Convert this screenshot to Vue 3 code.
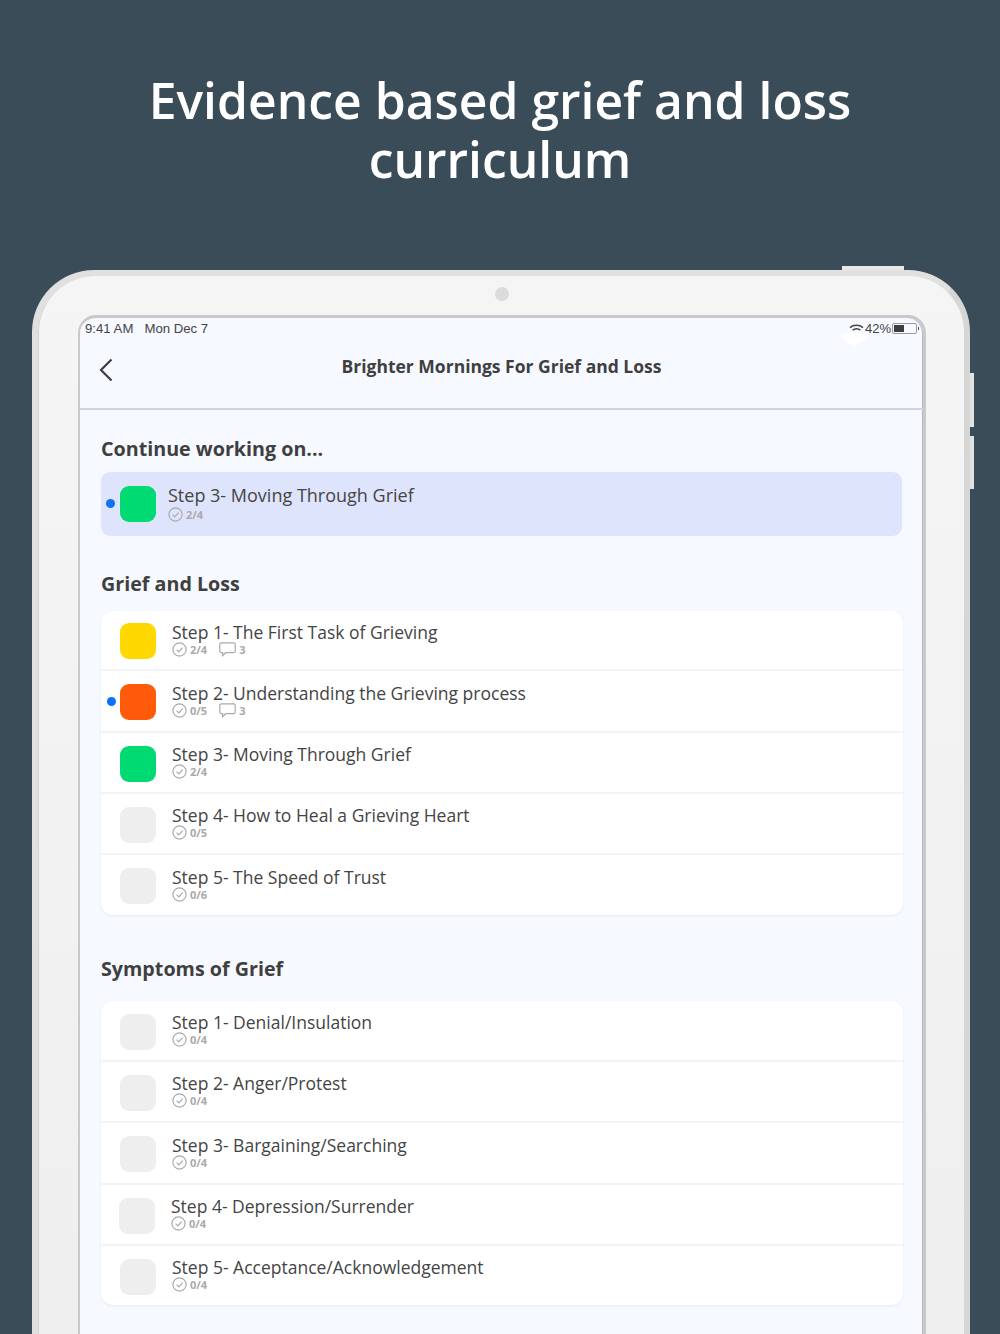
<script setup>
const griefRows = [
  { title: 'Step 1- The First Task of Grieving', done: '2/4', comments: 3, color: '#ffd800', short: true },
  { title: 'Step 2- Understanding the Grieving process', done: '0/5', comments: 3, color: '#ff5a0a', active: true, tall: true },
  { title: 'Step 3- Moving Through Grief', done: '2/4', color: '#00da72' },
  { title: 'Step 4- How to Heal a Grieving Heart', done: '0/5', color: '#eeeeee' },
  { title: 'Step 5- The Speed of Trust', done: '0/6', color: '#eeeeee' },
]
const symptomRows = [
  { title: 'Step 1- Denial/Insulation', done: '0/4', color: '#eeeeee' },
  { title: 'Step 2- Anger/Protest', done: '0/4', color: '#eeeeee' },
  { title: 'Step 3- Bargaining/Searching', done: '0/4', color: '#eeeeee', tall: true },
  { title: 'Step 4- Depression/Surrender', done: '0/4', color: '#eeeeee', nudge: true },
  { title: 'Step 5- Acceptance/Acknowledgement', done: '0/4', color: '#eeeeee' },
]
const groups = [
  { name: 'Grief and Loss', rows: griefRows },
  { name: 'Symptoms of Grief', rows: symptomRows },
]
</script>

<template>
  <div class="page">
    <h1 class="headline">Evidence based grief and loss<br />curriculum</h1>

    <div class="device">
      <span class="top-button"></span>
      <span class="side-button side-one"></span>
      <span class="side-button side-two"></span>
      <span class="camera"></span>

      <div class="screen">
        <div class="status">
          <span class="time">9:41 AM</span>
          <span class="date">Mon Dec 7</span>
          <span class="status-right">
            <svg class="wifi" width="15" height="10" viewBox="0 0 15 10" fill="none" stroke="#444" stroke-width="1.5">
              <path d="M1 3.6C4.6 .6 10.4 .6 14 3.6" />
              <path d="M3.6 6.2C5.8 4.4 9.2 4.4 11.4 6.2" />
            </svg>
            <span class="percent">42%</span>
            <span class="battery"><span class="battery-fill"></span></span>
            <span class="battery-tip"></span>
          </span>
          <svg class="wifi-ghost" width="27" height="17" viewBox="0 0 27 17" fill="#fff">
            <path d="M0 7C7 .5 20 .5 27 7L13.5 17Z" />
          </svg>
        </div>

        <header class="nav">
          <svg class="back" width="14" height="24" viewBox="0 0 14 24" fill="none" stroke="#3d3d3d" stroke-width="2.2">
            <path d="M12.5 1.5L2 12L12.5 22.5" />
          </svg>
          <span class="nav-title">Brighter Mornings For Grief and Loss</span>
        </header>

        <main class="content">
          <h2 class="section-title first">Continue working on...</h2>
          <div class="continue">
            <span class="dot"></span>
            <span class="swatch swatch-green"></span>
            <div class="text">
              <div class="row-title row-title-large">Step 3- Moving Through Grief</div>
              <div class="meta">
                <svg width="15" height="15" viewBox="0 0 15 15" fill="none" stroke="#aaa" stroke-width="1.2">
                  <circle cx="7.5" cy="7.5" r="6.6" />
                  <path d="M4.6 7.6L6.8 9.8L10.6 5.6" />
                </svg>
                <span>2/4</span>
              </div>
            </div>
          </div>

          <section v-for="group in groups" :key="group.name" class="group">
            <h2 class="section-title">{{ group.name }}</h2>
            <div class="card">
              <div
                v-for="row in group.rows"
                :key="row.title"
                class="row"
                :class="{ tall: row.tall, short: row.short, nudge: row.nudge }"
              >
                <span v-if="row.active" class="dot"></span>
                <span class="swatch" :style="{ background: row.color }"></span>
                <div class="text">
                  <div class="row-title">{{ row.title }}</div>
                  <div class="meta">
                    <svg width="15" height="15" viewBox="0 0 15 15" fill="none" stroke="#aaa" stroke-width="1.2">
                      <circle cx="7.5" cy="7.5" r="6.6" />
                      <path d="M4.6 7.6L6.8 9.8L10.6 5.6" />
                    </svg>
                    <span>{{ row.done }}</span>
                    <template v-if="row.comments">
                      <svg class="comment" width="17" height="15" viewBox="0 0 17 15" fill="none" stroke="#aaa" stroke-width="1.2">
                        <path d="M2.5 .8H14.5A1.7 1.7 0 0 1 16.2 2.5V9A1.7 1.7 0 0 1 14.5 10.7H6.6L3.6 13.6V10.7H2.5A1.7 1.7 0 0 1 .8 9V2.5A1.7 1.7 0 0 1 2.5 .8Z" />
                      </svg>
                      <span>{{ row.comments }}</span>
                    </template>
                  </div>
                </div>
              </div>
            </div>
          </section>
        </main>
      </div>
    </div>
  </div>
</template>

<style>
html, body { margin: 0; background: #3b4c59; }
</style>

<style scoped>
.page {
  width: 1000px;
  height: 1334px;
  overflow: hidden;
  background: #3b4c59;
  font-family: "Open Sans", sans-serif;
  box-sizing: border-box;
  padding-top: 71px;
}
.headline {
  margin: 0 0 81px;
  text-align: center;
  color: #fff;
  font-size: 49.8px;
  line-height: 59px;
  font-weight: 600;
}
.device {
  position: relative;
  box-sizing: border-box;
  width: 938px;
  height: 1200px;
  margin-left: 32px;
  padding: 39px 40px 0 40px;
  background: linear-gradient(180deg, #f5f5f5, #eeeeee);
  border: 6px solid #e0e0e0;
  border-right-color: #d6d6d6;
  border-radius: 62px;
  box-shadow: inset 1px 0 0 #d2d2d2;
}
.top-button {
  position: absolute;
  top: -10px;
  left: 804px;
  width: 62px;
  height: 4px;
  background: #e8e8e8;
}
.side-button {
  position: absolute;
  left: 932px;
  width: 4px;
  background: #e2e2e2;
}
.side-one { top: 97px; height: 54px; }
.side-two { top: 160px; height: 53px; }
.camera {
  position: absolute;
  top: 11px;
  left: 457px;
  width: 14px;
  height: 14px;
  border-radius: 50%;
  background: #dcdcdc;
}
.screen {
  box-sizing: border-box;
  width: 848px;
  height: 1100px;
  background: #f6f9ff;
  border: 3px solid #c9c9c9;
  border-left-width: 2px;
  border-bottom: 0;
  border-radius: 18px 18px 0 0;
  box-shadow: inset -1px 0 0 #aeb8dc;
}
.status {
  position: relative;
  display: flex;
  align-items: center;
  height: 21px;
  padding: 0 3px 0 5px;
  font-family: "Liberation Sans", sans-serif;
  font-size: 13.2px;
  color: #444;
}
.date { margin-left: 11px; }
.status-right {
  margin-left: auto;
  display: flex;
  align-items: center;
  gap: 1px;
}
.percent { font-size: 13px; }
.battery {
  box-sizing: border-box;
  display: block;
  width: 25px;
  height: 11px;
  padding: 1px;
  border: 1px solid #999;
  border-radius: 2px;
}
.battery-fill { display: block; width: 10px; height: 100%; background: #3d3d3d; }
.battery-tip { width: 1px; height: 3px; background: #555; margin-right: 1px; }
.wifi-ghost {
  position: absolute;
  right: 56px;
  top: 12px;
}
.nav {
  position: relative;
  box-sizing: border-box;
  height: 71px;
  display: flex;
  align-items: center;
  justify-content: center;
  border-bottom: 2px solid #d2d5d8;
  padding-bottom: 16px;
}
.back {
  position: absolute;
  left: 19px;
  top: 19px;
}
.nav-title {
  font-size: 17.5px;
  font-weight: 700;
  color: #3f3f3f;
}
.content { padding: 0 20px 0 21px; }
.section-title {
  margin: 0;
  font-size: 19.7px;
  line-height: 28px;
  font-weight: 700;
  color: #3f3f3f;
}
.section-title.first { padding-top: 25px; margin-bottom: 9px; }
.continue {
  position: relative;
  box-sizing: border-box;
  height: 64px;
  display: flex;
  align-items: center;
  gap: 12px;
  padding-left: 19px;
  margin-right: 1px;
  background: #dfe4fd;
  border-radius: 9px;
}
.continue .text { margin-top: -2px; }
.continue .meta { margin-top: 0; }
.group { padding-top: 34px; }
.group + .group { padding-top: 40px; }
.group .section-title { margin-bottom: 13px; }
.group + .group .section-title { margin-bottom: 18px; }
.card {
  background: #fff;
  border-radius: 12px;
  box-shadow: 0 1px 2px rgba(210, 220, 235, .5);
}
.row {
  position: relative;
  box-sizing: border-box;
  height: 61px;
  display: flex;
  align-items: center;
  gap: 16px;
  padding-left: 19px;
  border-bottom: 2px solid #f1f4fa;
}
.row.tall { height: 62px; }
.row.short { height: 60px; }
.row.nudge { padding-left: 18px; }
.row:last-child { border-bottom: 0; height: 60px; }
.group + .group .row:last-child { height: 59px; }
.row .swatch { margin-top: 2px; }
.row .dot { left: 6px; margin-top: -4px; }
.dot {
  position: absolute;
  left: 5px;
  top: 50%;
  width: 9px;
  height: 9px;
  margin-top: -5px;
  border-radius: 50%;
  background: #0a72f5;
}
.swatch {
  flex: none;
  width: 36px;
  height: 36px;
  border-radius: 9px;
}
.swatch-green { background: #00da72; }
.text { margin-top: -3px; }
.row-title {
  font-size: 17.5px;
  line-height: 23px;
  color: #444;
}
.row-title-large { font-size: 18px; }
.meta {
  display: flex;
  align-items: center;
  gap: 3px;
  height: 15px;
  margin-top: -2px;
  font-size: 11px;
  font-weight: 700;
  color: #aaa;
}
.meta svg { flex: none; }
.meta .comment { margin-left: 9px; }
</style>
